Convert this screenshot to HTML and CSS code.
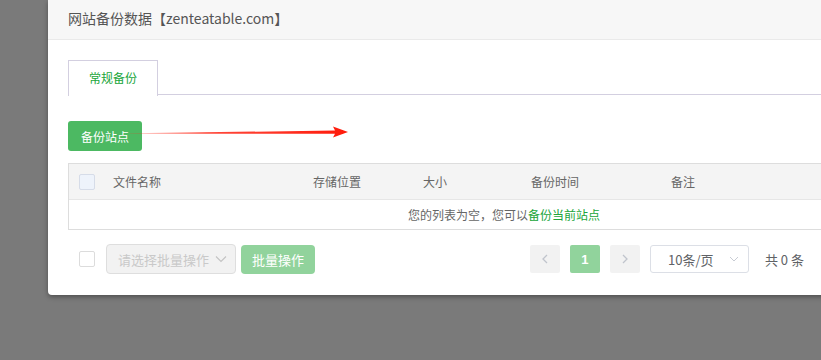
FILE: index.html
```html
<!DOCTYPE html>
<html lang="zh">
<head>
<meta charset="utf-8">
<title>网站备份数据</title>
<link rel="stylesheet" href="styles.css">
</head>
<body>
<div class="dialog">
  <div class="dlg-head">网站备份数据【zenteatable.com】</div>
  <div class="dlg-body">
    <div class="tabs">
      <div class="tab active">常规备份</div>
    </div>
    <div class="toolbar">
      <button class="btn-green">备份站点</button>
      <svg class="arrow" width="230" height="20" viewBox="0 0 230 20">
        <defs>
          <linearGradient id="ag" x1="0" y1="0" x2="1" y2="0">
            <stop offset="0" stop-color="#ff2a1a" stop-opacity="0.25"/>
            <stop offset="0.35" stop-color="#ff2a1a" stop-opacity="0.85"/>
            <stop offset="1" stop-color="#ff1a0a" stop-opacity="1"/>
          </linearGradient>
        </defs>
        <polygon points="0,11.2 205,8.6 203,4.5 218,10 203,15.5 205,11.8 0,11.8" fill="url(#ag)"/>
      </svg>
    </div>
    <div class="table">
      <div class="thead">
        <div class="c-chk"><span class="chk chk-head"></span></div>
        <div class="c-name">文件名称</div>
        <div class="c-loc">存储位置</div>
        <div class="c-size">大小</div>
        <div class="c-time">备份时间</div>
        <div class="c-note">备注</div>
      </div>
      <div class="empty">您的列表为空，您可以<span class="link">备份当前站点</span></div>
    </div>
    <div class="footer">
      <span class="chk"></span>
      <div class="batch-select">
        <span>请选择批量操作</span>
        <svg width="12" height="8" viewBox="0 0 12 8"><path d="M1 1.5 L6 6.5 L11 1.5" fill="none" stroke="#c4c4c4" stroke-width="1.2"/></svg>
      </div>
      <button class="btn-batch">批量操作</button>
      <div class="pager">
        <span class="pg pg-nav"><svg width="8" height="10" viewBox="0 0 8 10"><path d="M6 1 L2 5 L6 9" fill="none" stroke="#c0c4cc" stroke-width="1.3"/></svg></span>
        <span class="pg pg-cur">1</span>
        <span class="pg pg-nav"><svg width="8" height="10" viewBox="0 0 8 10"><path d="M2 1 L6 5 L2 9" fill="none" stroke="#c0c4cc" stroke-width="1.3"/></svg></span>
        <div class="size-select">
          <span>10条/页</span>
          <svg width="10" height="6" viewBox="0 0 10 6"><path d="M1 1 L5 5 L9 1" fill="none" stroke="#c8ccd4" stroke-width="1"/></svg>
        </div>
        <span class="total">共 0 条</span>
      </div>
    </div>
  </div>
</div>
</body>
</html>
```
FILE: styles.css
```css
html, body {
  margin: 0;
  padding: 0;
  height: 100%;
  overflow: hidden;
}
body {
  background: #7a7a7a;
  font-family: "Noto Sans CJK SC", "Noto Sans", "Liberation Sans", sans-serif;
  font-size: 12px;
  color: #666;
}
.dialog {
  margin-left: 48px;
  width: 912px;
  background: #fff;
  border-radius: 0 0 4px 4px;
  box-shadow: 0 2px 5px rgba(0, 0, 0, 0.35);
}
.dlg-head {
  height: 39px;
  line-height: 36px;
  padding-left: 20px;
  background: #f7f7f7;
  border-bottom: 1px solid #eaeaea;
  font-size: 14px;
  color: #555;
}
.dlg-body {
  padding: 20px 20px 21px 20px;
}
.tabs {
  display: flex;
  border-bottom: 1px solid #d3cfe0;
  height: 34px;
}
.tab {
  width: 88px;
  height: 34px;
  border: 1px solid #d3cfe0;
  border-bottom: none;
  background: #fff;
  color: #20a53a;
  text-align: center;
  line-height: 34px;
  font-size: 12px;
  margin-bottom: -1px;
  height: 35px;
}
.toolbar {
  position: relative;
  margin-top: 26px;
  height: 30px;
}
.btn-green {
  width: 74px;
  height: 30px;
  border: none;
  border-radius: 3px;
  background: #4cb962;
  color: #fff;
  font-family: inherit;
  font-size: 12px;
  padding: 0;
  cursor: pointer;
}
.arrow {
  position: absolute;
  left: 62px;
  top: 1px;
}
.table {
  margin-top: 12px;
  border: 1px solid #ddd;
}
.thead {
  display: grid;
  grid-template-columns: 44px 200px 110px 108px 140px 1fr;
  height: 35px;
  align-items: center;
  background: #f4f4f4;
  border-bottom: 1px solid #e6e6e6;
  color: #666;
}
.c-chk {
  padding-left: 10px;
  display: flex;
  align-items: center;
}
.chk {
  display: inline-block;
  box-sizing: border-box;
  width: 16px;
  height: 16px;
  border: 1px solid #dcdcdc;
  border-radius: 2px;
  background: #fff;
}
.chk-head {
  background: #eef3fb;
  border-color: #d6dce8;
}
.empty {
  height: 29px;
  line-height: 29px;
  text-align: center;
  color: #666;
}
.link {
  color: #20a53a;
}
.footer {
  display: flex;
  align-items: center;
  margin-top: 14px;
  padding-left: 11px;
  padding-right: 136px;
  height: 30px;
}
.batch-select {
  box-sizing: border-box;
  margin-left: 11px;
  width: 130px;
  height: 30px;
  border: 1px solid #dedede;
  border-radius: 4px;
  background: #f2f2f2;
  display: flex;
  align-items: center;
  justify-content: space-between;
  padding: 0 8px 0 11px;
  color: #c9c9c9;
  font-size: 13px;
}
.btn-batch {
  margin-left: 5px;
  width: 74px;
  height: 29px;
  border: none;
  border-radius: 4px;
  background: #91d39c;
  color: #fff;
  font-family: inherit;
  font-size: 13px;
  padding: 0;
}
.pager {
  margin-left: auto;
  display: flex;
  align-items: center;
  gap: 10px;
}
.pg {
  width: 30px;
  height: 28px;
  border-radius: 2px;
  display: flex;
  align-items: center;
  justify-content: center;
}
.pg-nav {
  background: #f2f2f2;
}
.pg-cur {
  background: #91d39c;
  color: #fff;
  font-weight: bold;
  font-family: "Liberation Sans", sans-serif;
  font-size: 13px;
}
.size-select {
  box-sizing: border-box;
  width: 99px;
  height: 28px;
  border: 1px solid #dcdfe6;
  border-radius: 3px;
  display: flex;
  align-items: center;
  justify-content: space-between;
  padding: 0 9px 0 17px;
  color: #606266;
  font-size: 13px;
}
.total {
  margin-left: 6px;
  color: #606266;
  font-size: 13px;
}
```
